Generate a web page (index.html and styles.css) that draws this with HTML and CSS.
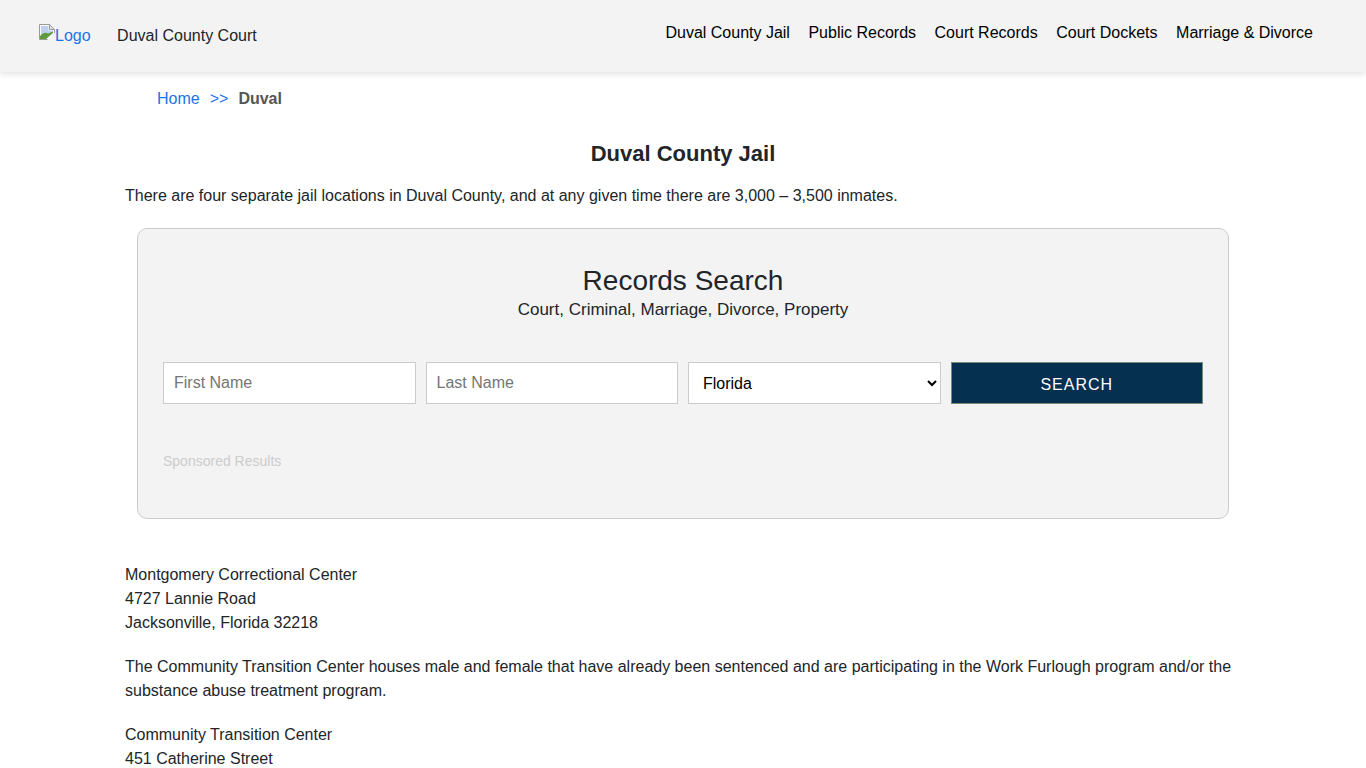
FILE: index.html
```html
<!DOCTYPE html>
<html lang="en">
<head>
  <meta charset="UTF-8">
  <meta name="viewport" content="width=device-width, initial-scale=1.0">
  <title>Duval County Jail</title>
  <link rel="stylesheet" href="styles.css">
</head>
<body>
  <header class="site-header">
    <div class="brand">
      <a class="logo" href="#">
        <svg class="broken-img" width="16" height="16" viewBox="0 0 16 16" aria-hidden="true">
          <path d="M0.5 0.5H10.5L15.5 5.5V15.5H0.5Z" fill="#fff" stroke="#9a9a9a"/>
          <path d="M10.5 0.5V5.5H15.5Z" fill="#e4e4e4" stroke="#9a9a9a"/>
          <path d="M2 2H9.5V6.5H14V8L2 12Z" fill="#bfd0ee"/>
          <path d="M1 15V12C4 8.5 7 8 9 9.5L14 7.5V9L7 15Z" fill="#5f9a3e"/>
          <path d="M8 16L16 8.5V16Z" fill="#f3f3f3"/>
        </svg>Logo</a>
      <span class="site-name">Duval County Court</span>
    </div>
    <nav class="main-nav">
      <a href="#">Duval County Jail</a>
      <a href="#">Public Records</a>
      <a href="#">Court Records</a>
      <a href="#">Court Dockets</a>
      <a href="#">Marriage &amp; Divorce</a>
    </nav>
  </header>

  <div class="crumbs">
    <a href="#">Home</a>
    <span class="sep">&gt;&gt;</span>
    <b>Duval</b>
  </div>

  <main class="content">
    <h1>Duval County Jail</h1>
    <p>There are four separate jail locations in Duval County, and at any given time there are 3,000 – 3,500 inmates.</p>

    <section class="search-box">
      <h2>Records Search</h2>
      <div class="search-sub">Court, Criminal, Marriage, Divorce, Property</div>
      <form class="search-form">
        <input type="text" placeholder="First Name">
        <input type="text" placeholder="Last Name">
        <select>
          <option>Florida</option>
        </select>
        <button type="button" class="btn">SEARCH</button>
      </form>
      <div class="sponsored">Sponsored Results</div>
    </section>

    <p>Montgomery Correctional Center<br>4727 Lannie Road<br>Jacksonville, Florida 32218</p>
    <p>The Community Transition Center houses male and female that have already been sentenced and are participating in the Work Furlough program and/or the substance abuse treatment program.</p>
    <p>Community Transition Center<br>451 Catherine Street</p>
  </main>
</body>
</html>
```
FILE: styles.css
```css
html, body {
  height: 100%;
  overflow: hidden;
}
body {
  margin: 0;
  font-family: "Liberation Sans", Arial, sans-serif;
  font-size: 16px;
  line-height: 24px;
  color: #212529;
  background-color: #fff;
}
a {
  color: #1a73e8;
  text-decoration: none;
}
.site-header {
  display: flex;
  justify-content: space-between;
  height: 72px;
  padding: 0 53px 0 39px;
  background-color: #f3f3f3;
  box-shadow: 0 2px 6px rgba(0, 0, 0, 0.12);
}
.brand {
  display: flex;
  align-items: center;
  gap: 26.5px;
}
.broken-img {
  vertical-align: 1px;
}
.main-nav {
  display: flex;
  gap: 18.5px;
  padding-top: 20.5px;
}
.main-nav a {
  color: #000;
}
.crumbs {
  display: flex;
  gap: 10px;
  padding: 15px 0 0 157px;
}
.crumbs .sep {
  color: #1a73e8;
}
.crumbs b {
  color: #555;
}
.content {
  width: 1116px;
  margin-left: 125px;
}
h1 {
  margin: 26px 0 0;
  font-size: 22px;
  line-height: 33px;
  text-align: center;
  font-weight: bold;
}
p {
  margin: 0 0 20px;
}
.content h1 + p {
  margin: 14px 0 20px;
}
.search-box {
  box-sizing: border-box;
  width: 1092px;
  height: 291px;
  margin: 0 0 44px 12px;
  padding: 35px 25px 0;
  background-color: #f3f3f3;
  border: 1px solid #ccc;
  border-radius: 10px;
  text-align: center;
}
h2 {
  margin: 0;
  font-size: 28px;
  line-height: 34px;
  font-weight: normal;
}
.search-sub {
  font-size: 17px;
}
.search-form {
  display: grid;
  grid-template-columns: repeat(4, 1fr);
  gap: 10px;
  margin-top: 40px;
}
.search-form input,
.search-form select {
  box-sizing: border-box;
  height: 42px;
  padding: 0 10px;
  font-family: inherit;
  font-size: 16px;
  background-color: #fff;
  border: 1px solid #ccc;
  border-radius: 0;
}
.search-form select {
  color: #000;
}
.search-form input::placeholder {
  color: #757575;
}
.btn {
  height: 42px;
  padding-top: 5px;
  font-family: inherit;
  font-size: 16px;
  letter-spacing: 1px;
  color: #fff;
  background-color: #06304f;
  border: 1px solid #7a8a78;
  cursor: pointer;
}
.sponsored {
  margin-top: 45px;
  font-size: 14px;
  color: #ccc;
  text-align: left;
}
```
